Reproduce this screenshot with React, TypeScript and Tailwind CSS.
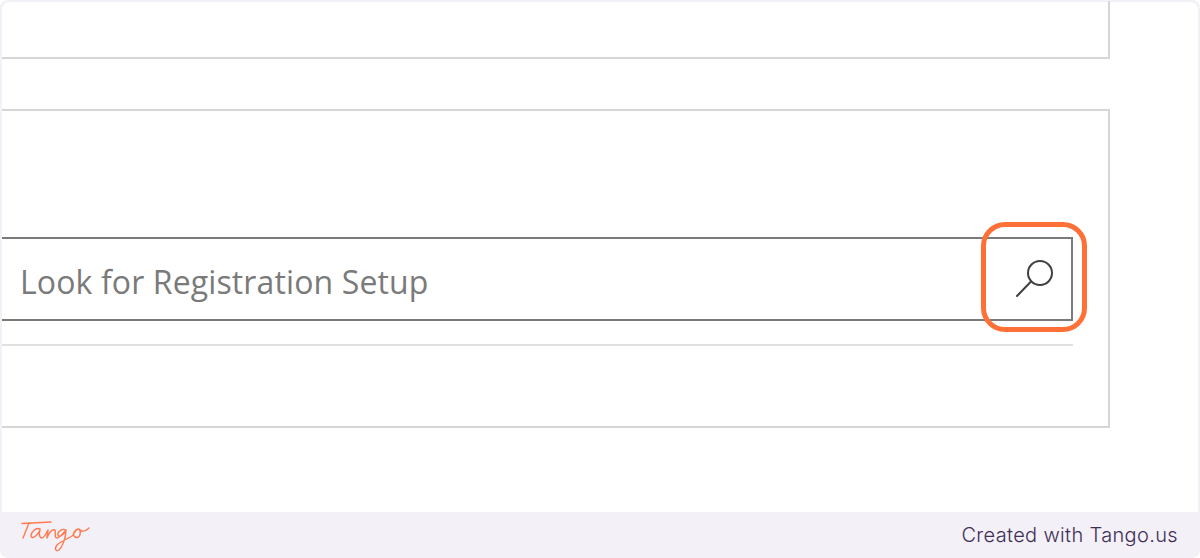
import React from "react";

function TangoLogo() {
  return (
    <svg width="70" height="36" viewBox="0 0 70 36" fill="none" stroke="#ff7a50" strokeWidth="1.4" strokeLinecap="round" strokeLinejoin="round">
      <path d="M1 6.500C10 6 20 5.500 30 5" />
      <path d="M8 6C6 11 4 16 2 21" />
      <path d="M19 12C15 10 10 15 10 19C10 22 15 21 19 13C18 16 18 21 21 21C23 21 25 17 27 13C27 16 26 18 26 21C28 16 31 12 34 13C35 15 33 21 36 21C39 21 42 16 45 13C41 11 36 15 37 18C38 21 43 18 45 13C45 20 42 29 38 33C35 35 33 32 36 28C39 25 46 22 51 19C53 17 54 13 57 12C53 13 51 18 54 20C58 22 61 17 58 12C60 15 64 15 68 11" />
    </svg>
  );
}

export default function App() {
  return (
    <div className="w-[1200px] h-[558px] bg-[#f3f0f7] rounded-lg p-[2px] pb-0 flex flex-col overflow-hidden">
      <div className="h-[510px] shrink-0 bg-white rounded-t-lg relative">
        <div className="w-[1108px] h-[58px] -mt-[1px] border-r-2 border-b-2 border-[#d6d6d6]" />
        <div className="w-[1108px] h-[319px] mt-[50px] border-t-2 border-r-2 border-b-2 border-[#d6d6d6] pt-[126px] pr-[35px]">
          <div className="h-[84px] border-t-2 border-r-2 border-b-2 border-[#7a7a7a] flex items-center justify-between pl-[18px] pr-[13px]">
            <span className="text-[32px] text-[#7a7a7a] font-['Open_Sans',sans-serif] tracking-[0.12px] translate-y-[3px]">Look for Registration Setup</span>
            <svg width="44" height="44" viewBox="0 0 44 44" fill="none" stroke="#404040" strokeWidth="2" strokeLinecap="round">
              <circle cx="26" cy="16" r="12" />
              <path d="M17 24.500L3 39" />
            </svg>
          </div>
          <div className="h-[2px] mt-[23px] bg-[#e0e0e0]" />
        </div>
        <div className="absolute left-[979px] top-[220px] w-[106px] h-[110px] border-[5px] border-[#ff7038] rounded-[24px]" />
      </div>
      <div className="flex-1 flex items-center justify-between pl-[19px] pr-[20px]">
        <TangoLogo />
        <span className="text-[20px] font-light text-[#3f2f55] tracking-[0.35px] font-['Inter',sans-serif]">Created with Tango.us</span>
      </div>
    </div>
  );
}
